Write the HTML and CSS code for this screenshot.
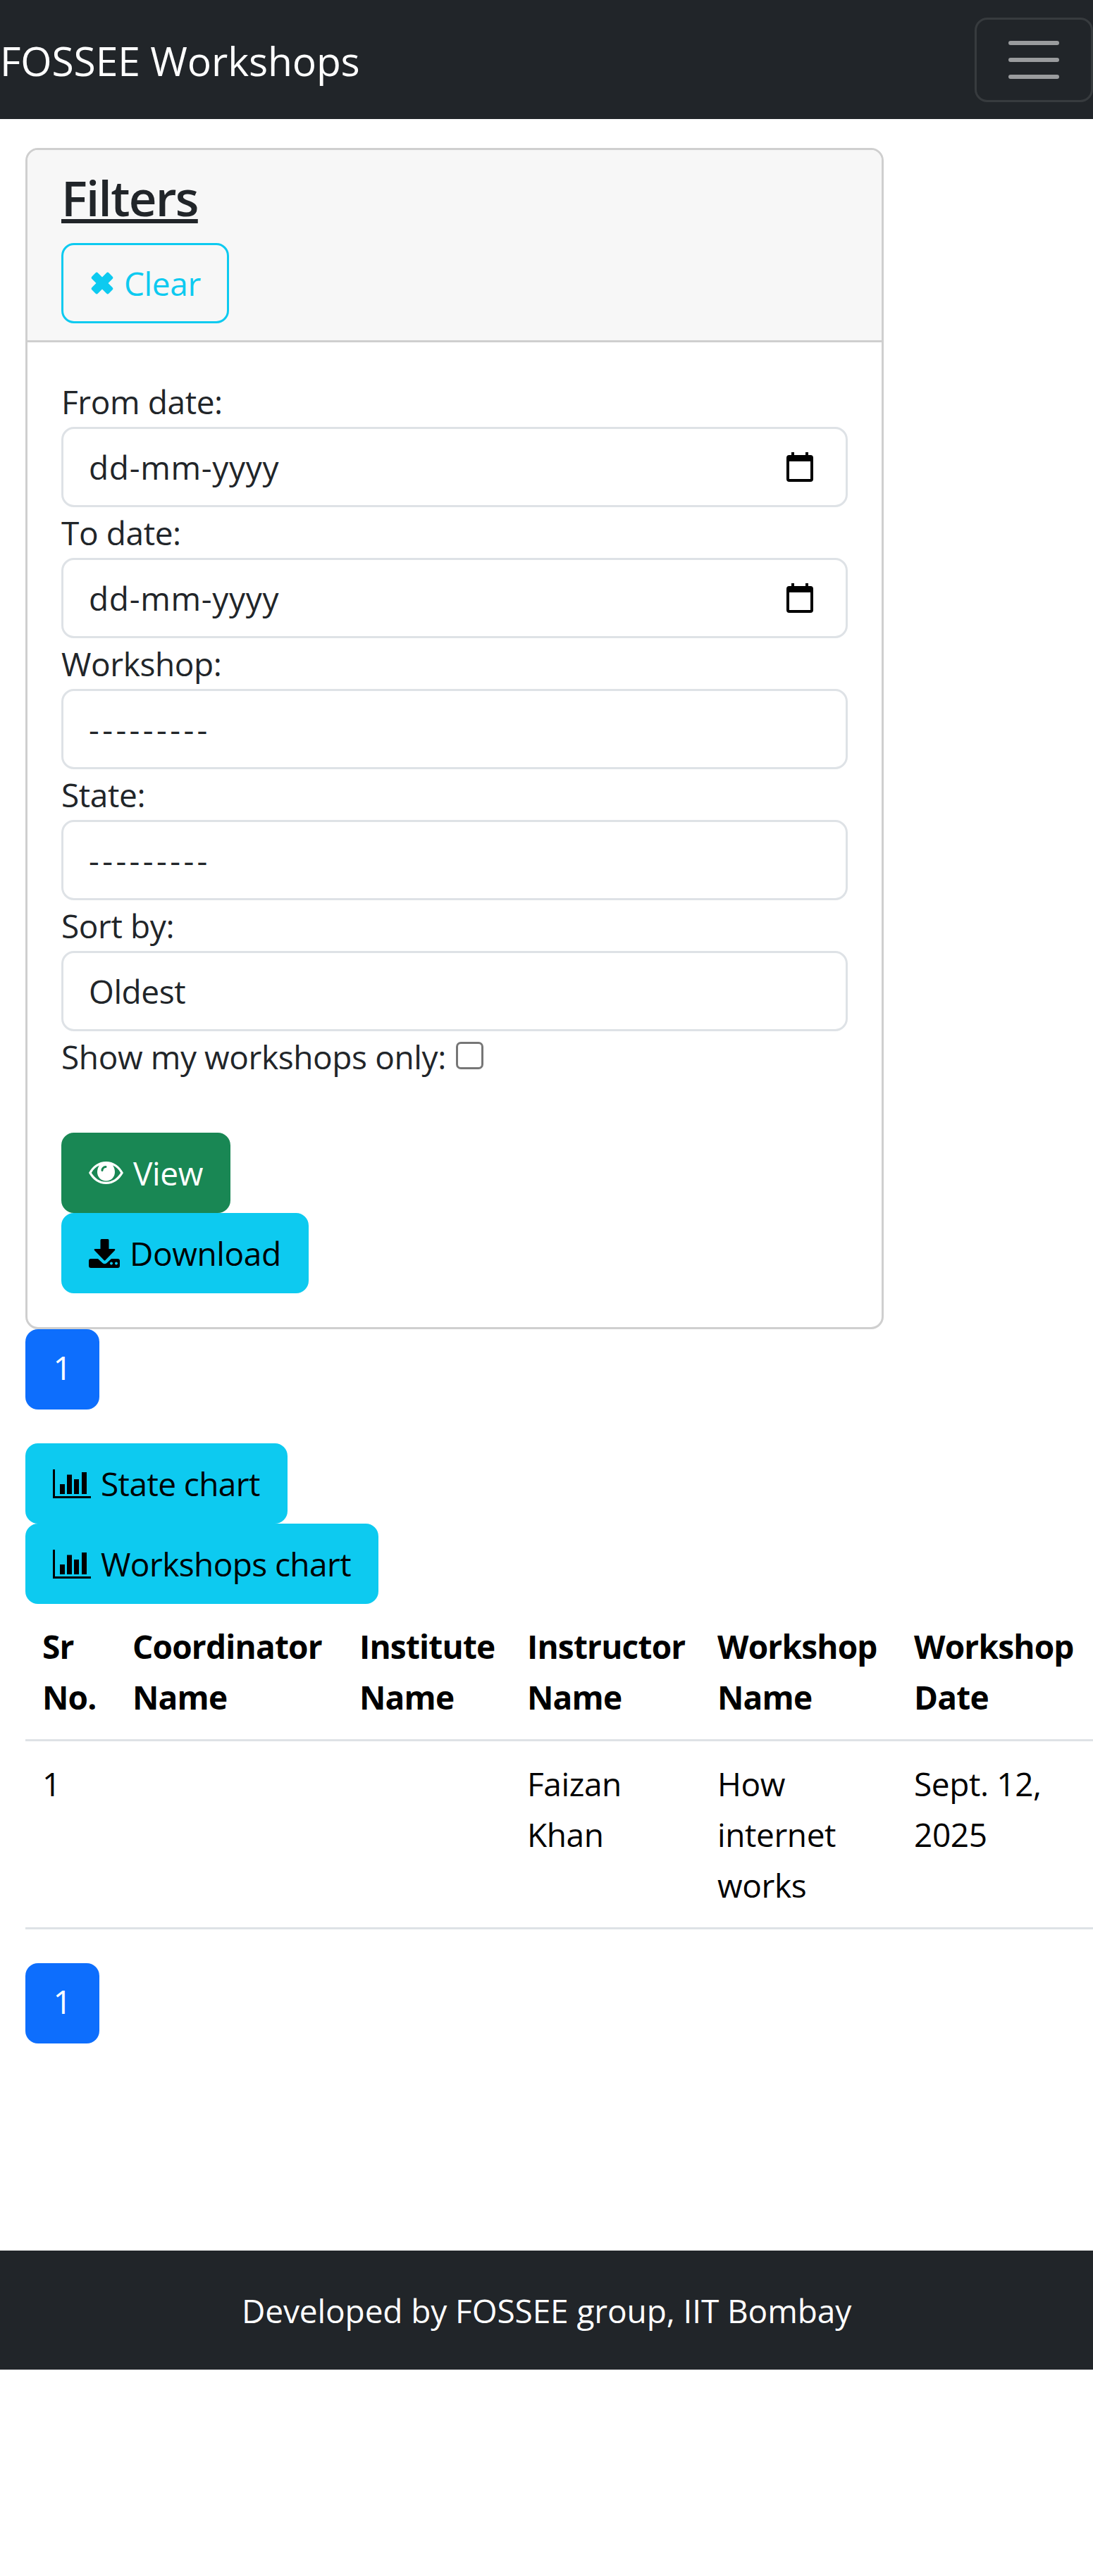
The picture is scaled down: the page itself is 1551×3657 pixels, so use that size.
FILE: index.html
```html
<!DOCTYPE html>
<html>
<head>
    <title>FOSSEE Workshops</title>
    <meta name="viewport" content="width=device-width, initial-scale=1">
    <link rel="stylesheet" href="styles.css">
</head>
<body>
    <nav class="navbar">
        <a class="brand" href="#">FOSSEE Workshops</a>
        <button class="toggler" type="button" aria-label="Toggle navigation">
            <svg width="90" height="90" viewBox="0 0 30 30"><path d="M4 7h22M4 15h22M4 23h22" stroke="rgba(255,255,255,0.55)" stroke-width="2" stroke-linecap="round" fill="none"/></svg>
        </button>
    </nav>

    <main class="content">
        <section class="card">
            <div class="card-header">
                <h4 class="card-title"><u>Filters</u></h4>
                <a class="btn btn-outline-info btn-clear" href="#">
                    <svg class="icon-clear" viewBox="0 0 32 32" fill="currentColor"><rect x="10" y="-1" width="12" height="34" rx="2.500" transform="rotate(45 16 16)"/><rect x="10" y="-1" width="12" height="34" rx="2.500" transform="rotate(-45 16 16)"/></svg>
                    Clear
                </a>
            </div>
            <form class="card-body">
                <label class="field-label">From date:</label>
                <div class="form-control">
                    <span class="date-text">dd-mm-yyyy</span>
                    <svg class="icon-date" viewBox="0 0 38 42"><path fill-rule="evenodd" d="M7 0h4v4h16V0h4v4h3q4 0 4 4v30q0 4-4 4H4q-4 0-4-4V8q0-4 4-4h3zM4 13v25h30V13z"/></svg>
                </div>
                <label class="field-label">To date:</label>
                <div class="form-control">
                    <span class="date-text">dd-mm-yyyy</span>
                    <svg class="icon-date" viewBox="0 0 38 42"><path fill-rule="evenodd" d="M7 0h4v4h16V0h4v4h3q4 0 4 4v30q0 4-4 4H4q-4 0-4-4V8q0-4 4-4h3zM4 13v25h30V13z"/></svg>
                </div>
                <label class="field-label">Workshop:</label>
                <select class="form-control select-empty"><option>---------</option></select>
                <label class="field-label">State:</label>
                <select class="form-control select-empty"><option>---------</option></select>
                <label class="field-label">Sort by:</label>
                <select class="form-control"><option>Oldest</option></select>
                <div class="check-row">
                    <label class="field-label" for="mine">Show my workshops only:</label>
                    <input class="check" type="checkbox" id="mine">
                </div>
                <div class="btn-stack form-actions">
                    <button class="btn btn-success" type="button">
                        <svg class="icon-eye" viewBox="0 0 49 32"><path fill-rule="evenodd" d="M24.500 0C35 0 43.500 6 49 16c-5.500 10-14 16-24.500 16S5.500 26 0 16C5.500 6 14 0 24.500 0zM15 5.500C10 7.500 6.500 11 3.800 16c5 8 12 12.800 20.700 12.800S40.200 24 45.200 16C42.500 11 39 7.500 34 5.500c2 2.600 3 6 3 9.500 0 7-5.500 12.500-12.500 12.500S12 22 12 15c0-3.500 1-6.900 3-9.500zM24 6c-3.500 0-6.500 3-6.500 6.500 0 .8.700 1.500 1.500 1.500s1.500-.7 1.500-1.500c0-1.900 1.600-3.500 3.500-3.500.8 0 1.500-.7 1.500-1.500S24.800 6 24 6z" fill="currentColor"/></svg>
                        View
                    </button>
                    <button class="btn btn-info" type="button">
                        <svg class="icon-download" viewBox="0 0 44 41"><path fill-rule="evenodd" d="M18 0h9q1.500 0 1.500 1.500V14h7.500q2 0 1 2L23.500 30q-1 1-2 0L8 16q-1-2 1-2h7.500V1.500Q16.500 0 18 0zM3 28h10l6.500 6q3 2.500 6 0L32 28h9q3 0 3 3v7q0 3-3 3H3q-3 0-3-3v-7q0-3 3-3zm31 6.500a2 2 0 1 0 0 .01zm7 0a2 2 0 1 0 0 .01z" fill="currentColor"/></svg>
                        Download
                    </button>
                </div>
            </form>
        </section>

        <div class="pagination"><a class="page-link" href="#">1</a></div>

        <div class="btn-stack">
            <a class="btn btn-info btn-chart" href="#">
                <svg class="icon-chart" viewBox="0 0 54 41"><path d="M0 0h3v38h51v3H0zM10 21h7v14h-7zM20 7.500h7V35h-7zM30 14h7v21h-7zM41 4h7v31h-7z" fill="currentColor"/></svg>
                State chart
            </a>
            <a class="btn btn-info btn-chart" href="#">
                <svg class="icon-chart" viewBox="0 0 54 41"><path d="M0 0h3v38h51v3H0zM10 21h7v14h-7zM20 7.500h7V35h-7zM30 14h7v21h-7zM41 4h7v31h-7z" fill="currentColor"/></svg>
                Workshops chart
            </a>
        </div>

        <table class="table">
            <colgroup>
                <col class="col-sr">
                <col class="col-coordinator">
                <col class="col-institute">
                <col class="col-instructor">
                <col class="col-workshop">
                <col class="col-date">
            </colgroup>
            <thead>
                <tr>
                    <th>Sr No.</th>
                    <th>Coordinator Name</th>
                    <th>Institute Name</th>
                    <th>Instructor Name</th>
                    <th>Workshop Name</th>
                    <th>Workshop Date</th>
                </tr>
            </thead>
            <tbody>
                <tr>
                    <td>1</td>
                    <td></td>
                    <td></td>
                    <td>Faizan Khan</td>
                    <td>How internet works</td>
                    <td>Sept. 12, 2025</td>
                </tr>
            </tbody>
        </table>

        <div class="pagination pagination-bottom"><a class="page-link" href="#">1</a></div>
    </main>

    <footer class="footer">Developed by FOSSEE group, IIT Bombay</footer>
</body>
</html>
```

FILE: styles.css
```css
* {
    box-sizing: border-box;
}
body {
    margin: 0;
    font-family: "Open Sans", "Noto Sans", sans-serif;
    font-size: 46px;
    line-height: 72px;
    letter-spacing: -0.4px;
    color: #212529;
    background-color: #fff;
}
a {
    text-decoration: none;
}

.navbar {
    display: flex;
    justify-content: space-between;
    align-items: center;
    height: 169px;
    background-color: #212529;
}
.brand {
    padding-top: 2px;
    font-size: 57px;
    line-height: 90px;
    letter-spacing: -0.15px;
    color: #fff;
}
.toggler {
    display: flex;
    justify-content: center;
    align-items: center;
    width: 168px;
    height: 120px;
    padding: 0;
    background: none;
    border: 3px solid rgba(255,255,255,0.1);
    border-radius: 18px;
}

.content {
    height: 3026px;
    padding: 41px 0 0 36px;
}

.card {
    width: 1218px;
    border: 3px solid #cfcfcf;
    border-radius: 18px;
    overflow: hidden;
}
.card-header {
    height: 273px;
    padding: 24px 48px;
    background-color: #f7f7f7;
    border-bottom: 3px solid #cfcfcf;
}
.card-title {
    margin: 0 0 22px;
    font-size: 69px;
    font-weight: 600;
    line-height: 86px;
    letter-spacing: -1.7px;
}
.card-body {
    display: block;
    padding: 48px;
}
.field-label {
    display: block;
}
.form-control {
    display: flex;
    justify-content: space-between;
    align-items: center;
    width: 100%;
    height: 114px;
    padding: 0 46px 0 36px;
    font-family: inherit;
    font-size: inherit;
    letter-spacing: inherit;
    color: #212529;
    background-color: #fff;
    border: 3px solid #dee2e6;
    border-radius: 18px;
    appearance: none;
}
.date-text {
    letter-spacing: 0.7px;
}
.select-empty {
    letter-spacing: 4.4px;
}
.check-row {
    display: flex;
    align-items: flex-start;
    gap: 14px;
}
.check {
    width: 39px;
    height: 39px;
    margin: 15px 0 0;
    background-color: #fff;
    border: 3px solid #767676;
    border-radius: 7px;
    appearance: none;
}
.form-actions {
    margin-top: 72px;
}

.btn-stack {
    display: flex;
    flex-direction: column;
    align-items: flex-start;
}
.btn {
    display: inline-flex;
    align-items: center;
    gap: 14px;
    height: 114px;
    padding: 0 36px;
    font-family: inherit;
    font-size: inherit;
    letter-spacing: inherit;
    border: 3px solid transparent;
    border-radius: 18px;
}
.btn-success {
    color: #fff;
    background-color: #198754;
    border-color: #198754;
}
.btn-info {
    color: #000;
    background-color: #0dcaf0;
    border-color: #0dcaf0;
}
.btn-outline-info {
    color: #0dcaf0;
    border-color: #0dcaf0;
}
.btn-clear {
    gap: 15px;
    padding: 0 37px 0 39px;
}
.btn-chart {
    letter-spacing: -0.6px;
}

.icon-clear {
    width: 32px;
    height: 32px;
}
.icon-date {
    width: 38px;
    height: 42px;
}
.icon-eye {
    width: 49px;
    height: 32px;
}
.icon-download {
    width: 44px;
    height: 41px;
}
.icon-chart {
    width: 54px;
    height: 41px;
}

.pagination {
    display: flex;
    margin-bottom: 48px;
}
.page-link {
    display: block;
    width: 105px;
    height: 114px;
    padding: 18px 0;
    text-align: center;
    color: #fff;
    background-color: #0d6efd;
    border-radius: 18px;
}
.pagination-bottom {
    margin-top: 48px;
    margin-bottom: 0;
}

.table {
    width: 1515px;
    table-layout: fixed;
    border-collapse: collapse;
    color: #000;
}
.col-sr { width: 128px; }
.col-coordinator { width: 322px; }
.col-institute { width: 238px; }
.col-instructor { width: 270px; }
.col-workshop { width: 279px; }
.col-date { width: 278px; }
.table th,
.table td {
    padding: 24px;
    text-align: left;
    vertical-align: top;
    border-bottom: 3px solid #dee2e6;
}
.table th {
    font-weight: 700;
    letter-spacing: -0.8px;
}

.footer {
    display: flex;
    justify-content: center;
    align-items: center;
    height: 169px;
    letter-spacing: -0.1px;
    color: #fff;
    background-color: #212529;
}
```
